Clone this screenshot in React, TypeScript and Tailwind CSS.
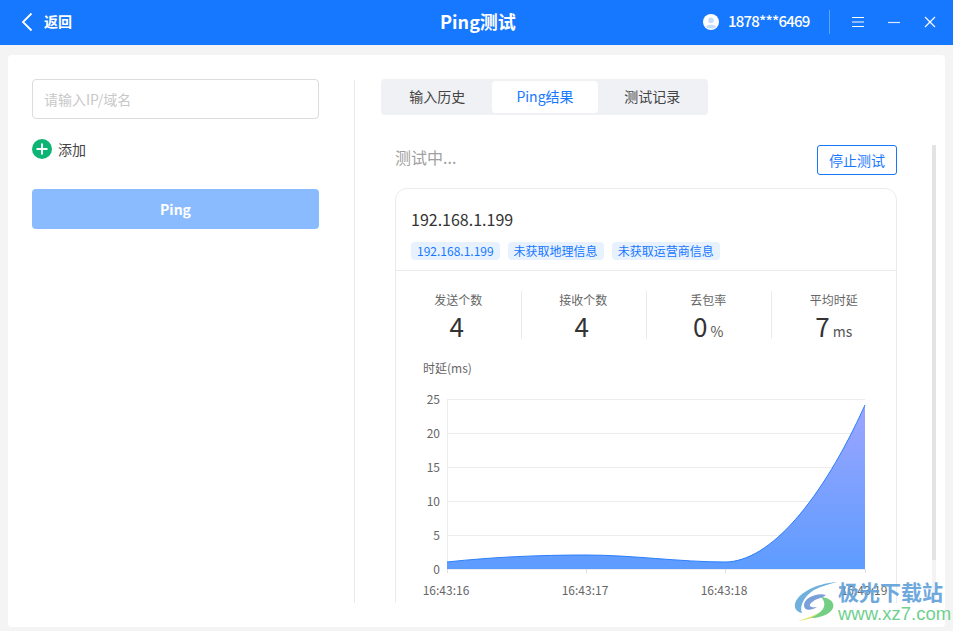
export default function App() {
  const stats = [
    { label: "发送个数", value: "4", unit: "" },
    { label: "接收个数", value: "4", unit: "" },
    { label: "丢包率", value: "0", unit: "%" },
    { label: "平均时延", value: "7", unit: "ms" },
  ];
  const ys = [
    { v: "25", y: 10 },
    { v: "20", y: 44 },
    { v: "15", y: 78 },
    { v: "10", y: 112 },
    { v: "5", y: 146 },
    { v: "0", y: 180 },
  ];
  const xs = [
    { t: "16:43:16", x: 51 },
    { t: "16:43:17", x: 190 },
    { t: "16:43:18", x: 329 },
    { t: "16:43:19", x: 469 },
  ];
  const curve = "M51 173 C97 168 144 166 190 166 C236 166 284 173 329 173 C374 173 426 111 469 16";
  return (
    <div className="relative flex h-[631px] w-[953px] flex-col overflow-hidden bg-[#f4f4f4] font-['Noto_Sans_CJK_SC','Noto_Sans',sans-serif] text-[#333]">
      <header className="flex h-[45px] shrink-0 items-center bg-[#1677ff] pb-[2px] text-white">
        <div className="flex w-[380px] items-center pl-[21px]">
          <svg width="12" height="20" viewBox="0 0 12 20" fill="none" stroke="white" strokeWidth="1.8">
            <path d="M10.5 1.5 L2 10 L10.5 18.5" />
          </svg>
          <span className="ml-[11px] text-[14px] font-bold">返回</span>
        </div>
        <div className="w-[196px] text-center text-[18px] font-bold">Ping测试</div>
        <div className="flex flex-1 items-center">
          <svg className="ml-[127px]" width="16" height="16" viewBox="0 0 16 16">
            <circle cx="8" cy="8" r="8" fill="white" />
            <circle cx="8" cy="6.2" r="2.8" fill="#c5dcfb" />
            <path d="M3 13.2 C3.5 10 12.5 10 13 13.2 C11 15 5 15 3 13.2 Z" fill="#c5dcfb" />
          </svg>
          <span className="ml-[9px] text-[15px] font-medium tracking-[-0.8px]">1878***6469</span>
          <div className="ml-5 h-6 w-px bg-[#5ea2ff]" />
          <svg className="ml-[21px]" width="14" height="12" viewBox="0 0 14 12" stroke="white" strokeWidth="1" fill="none">
            <path d="M1 1.5H13M1 6H13M1 10.5H13" />
          </svg>
          <svg className="ml-[22px]" width="14" height="12" viewBox="0 0 14 12" stroke="white" strokeWidth="1.2" fill="none" opacity="0.85">
            <path d="M1 6.5H13" />
          </svg>
          <svg className="ml-[22px]" width="14" height="14" viewBox="0 0 14 14" stroke="white" strokeWidth="1.2" fill="none">
            <path d="M2 2L12 12M12 2L2 12" />
          </svg>
        </div>
      </header>

      <main className="flex min-h-0 flex-1 px-2 pb-1 pt-[10px]">
        <div className="flex min-h-0 flex-1 rounded bg-white">
          <aside className="mb-6 mt-[25px] flex w-[347px] shrink-0 flex-col border-r border-[#e8e8e8] pl-6 pr-[35px]">
            <div className="-mt-px flex h-10 items-center rounded border border-[#dcdcdc] px-[11px] text-[14px] text-[#c8c8c8]">
              请输入IP/域名
            </div>
            <div className="mt-5 flex items-center">
              <svg width="20" height="20" viewBox="0 0 20 20">
                <circle cx="10" cy="10" r="10" fill="#0cb574" />
                <path d="M10 4.5V15.5M4.5 10H15.5" stroke="white" strokeWidth="2" />
              </svg>
              <span className="ml-[6px] text-[14px] leading-[20px] text-[#444]">添加</span>
            </div>
            <button className="mt-[30px] h-10 rounded bg-[#8bbbff] text-[14px] font-bold text-white">Ping</button>
          </aside>

          <section className="flex min-h-0 min-w-0 flex-1 flex-col pl-[26px] pt-6">
            <div className="flex h-9 w-[327px] shrink-0 items-center rounded bg-[#f0f1f5] px-[2px] pb-[1px] text-[14px]">
              <div className="w-[109px] text-center text-[#444]">输入历史</div>
              <div className="mt-[1px] flex h-8 w-[107px] items-center justify-center rounded-sm bg-white pb-[1px] text-[#1677ff]">Ping结果</div>
              <div className="w-[108px] text-center text-[#444]">测试记录</div>
            </div>

            <div className="relative mb-6 mt-[30px] flex min-h-0 flex-1 pl-[14px]">
              <div className="min-h-0 w-[502px] overflow-hidden">
                <div className="flex h-[30px] items-center justify-between">
                  <span className="pb-[6px] text-[16px] text-[#a0a0a0]">测试中...</span>
                  <button className="h-[30px] w-[80px] rounded-[3px] border border-[#1677ff] text-[14px] text-[#1677ff]">停止测试</button>
                </div>
                <div className="mt-[13px] h-[480px] rounded-t-xl border border-[#ebebeb] bg-white">
                  <div className="border-b border-[#ebebeb] px-[15px] pb-[10px] pt-[18px]">
                    <div className="text-[16px] leading-[24px] text-[#333]">192.168.1.199</div>
                    <div className="mt-[11px] flex gap-2 text-[12px] leading-[18px] text-[#1677ff]">
                      <span className="rounded-sm bg-[#e8f2ff] px-[6px]">192.168.1.199</span>
                      <span className="rounded-sm bg-[#e8f2ff] px-[6px]">未获取地理信息</span>
                      <span className="rounded-sm bg-[#e8f2ff] px-[6px]">未获取运营商信息</span>
                    </div>
                  </div>
                  <div className="mt-5 grid grid-cols-4">
                    {stats.map((s, i) => (
                      <div key={s.label} className={`flex h-12 w-[125.5px] flex-col items-center ${i < 3 ? "border-r border-[#ebebeb]" : ""}`}>
                        <div className="text-[12px] leading-[18px] text-[#666]">{s.label}</div>
                        <div className={`mt-[2px] flex items-baseline text-[26px] leading-[30px] text-[#333] ${s.unit ? "" : "pr-[3px]"}`}>
                          {s.value}
                          {s.unit && <span className="ml-[3px] text-[14px] text-[#555]">{s.unit}</span>}
                        </div>
                      </div>
                    ))}
                  </div>
                  <div className="ml-[27px] mt-5 text-[12px] leading-[18px] text-[#666]">时延(ms)</div>
                  <svg className="mt-3 block" width="500" height="230" viewBox="0 0 500 230" fontSize="12" fill="#666">
                    <defs>
                      <linearGradient id="area" x1="0" y1="0" x2="0" y2="1">
                        <stop offset="0" stopColor="#9ca5ff" />
                        <stop offset="1" stopColor="#5d9cff" />
                      </linearGradient>
                    </defs>
                    {ys.map((g) => (
                      <g key={g.v}>
                        <line x1="51" x2="469" y1={g.y + 0.5} y2={g.y + 0.5} stroke="#ececec" />
                        <text x="44" y={g.y + 5} textAnchor="end">{g.v}</text>
                      </g>
                    ))}
                    <line x1="51.5" x2="51.5" y1="10" y2="184" stroke="#ececec" />
                    <path d={`${curve} V180 H51 Z`} fill="url(#area)" />
                    <path d={curve} fill="none" stroke="#2b7ffb" />
                    {xs.map((l) => (
                      <g key={l.t}>
                        <line x1={l.x + 0.5} x2={l.x + 0.5} y1="180" y2="184" stroke="#e0e0e0" />
                        <text x={l.x - 1} y="206" textAnchor="middle">{l.t}</text>
                      </g>
                    ))}
                  </svg>
                </div>
              </div>
              <div className="ml-[35px] w-[4px] bg-[#f3f3f3]">
                <div className="h-[415px] w-full bg-[#e3e3e3]" />
              </div>
            </div>
          </section>
        </div>
      </main>

      <div className="pointer-events-none absolute left-[793px] top-[581px] flex items-start">
        <svg width="46" height="42" viewBox="0 0 46 42" fill="none">
          <path d="M44 1 C28 2 9 9 3 20 C0 26 3 31 9 32 C6 26 11 15 21 9 C29 5 37 3 44 1 Z" fill="#6fb0de" />
          <path d="M33 14 C24 11 11 17 11 24 C11 30 18 30 24 26 C18 27 15 25 18 22 C22 18 28 17 30 16 Z" fill="#7b9fd8" />
          <path d="M5 40 C14 37 22 34 30 30 C25 36 14 39 5 40 Z" fill="#dfe56f" />
          <path d="M28 16 C40 17 44 25 37 31 C32 35 24 37 18 37 C26 33 37 26 28 16 Z" fill="#73cf85" />
        </svg>
        <div className="-ml-[1px] -mt-[3px] flex flex-col">
          <span className="text-[21px] font-bold leading-[26px] text-[#5fa0da] opacity-90">极光下载站</span>
          <span className="font-['Liberation_Sans',sans-serif] text-[18.5px] leading-[20px] text-[#6fd08f]">www.xz7.com</span>
        </div>
      </div>
    </div>
  );
}
